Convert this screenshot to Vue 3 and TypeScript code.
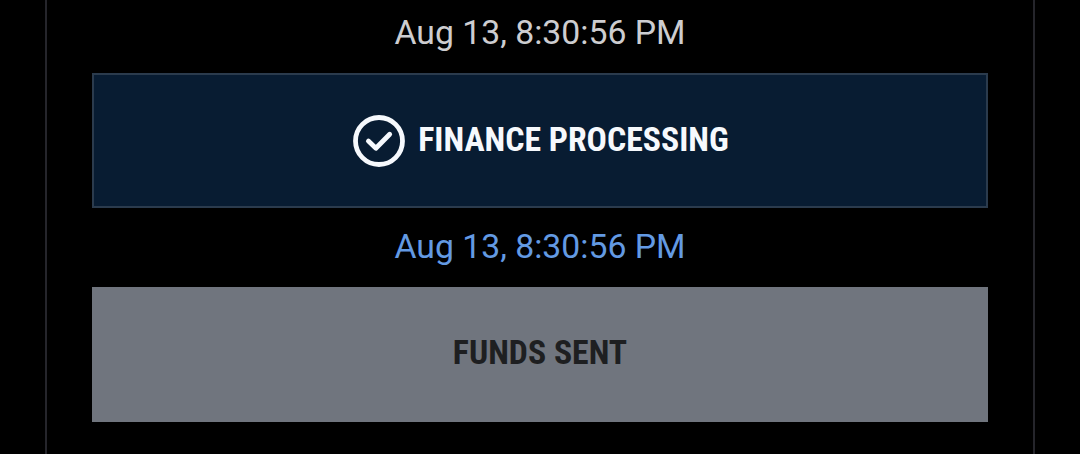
<script setup lang="ts">
interface Step {
  label: string
  time?: string
  state: 'active' | 'pending'
}

const previousTime: string = 'Aug 13, 8:30:56 PM'
const steps: Step[] = [
  { label: 'FINANCE PROCESSING', time: 'Aug 13, 8:30:56 PM', state: 'active' },
  { label: 'FUNDS SENT', state: 'pending' },
]
</script>

<template>
  <main class="screen">
    <section class="panel">
      <time class="time">{{ previousTime }}</time>
      <template v-for="step in steps" :key="step.label">
        <div class="step" :class="step.state">
          <svg v-if="step.state === 'active'" class="check" viewBox="0 0 52 52">
            <circle cx="26" cy="26" r="23.5" />
            <path d="M15.4 26.1 L22.9 33.3 L36.7 19.2" />
          </svg>
          <span class="label">{{ step.label }}</span>
        </div>
        <time v-if="step.time" class="time current">{{ step.time }}</time>
      </template>
    </section>
  </main>
</template>

<style>
body {
  margin: 0;
  background: #000;
}
</style>

<style scoped>
.screen {
  height: 454px;
  box-sizing: border-box;
  padding: 0 45px;
  overflow: hidden;
  background: #000;
  font-family: Roboto, sans-serif;
}
.panel {
  height: 454px;
  box-sizing: border-box;
  padding: 0 45px;
  border: solid #25252b;
  border-width: 0 2px;
}
.time {
  display: block;
  height: 73px;
  box-sizing: border-box;
  padding-top: 13px;
  color: #cdcdd0;
  font-size: 33.75px;
  line-height: 40px;
  text-align: center;
  white-space: nowrap;
}
.current {
  height: 79px;
  padding-top: 19px;
  color: #639ae3;
}
.step {
  display: flex;
  align-items: center;
  justify-content: center;
  height: 135px;
  box-sizing: border-box;
  gap: 13px;
}
.active {
  border: 2px solid #2b3b4d;
  background: #081c32;
  color: #f6f9fd;
}
.pending {
  background: #70757e;
  color: #1e1f21;
}
.check {
  width: 52px;
  height: 52px;
  fill: none;
  stroke: #f6f9fd;
  stroke-width: 4.8;
  stroke-linecap: round;
  stroke-linejoin: round;
}
.active .check {
  margin-left: 2px;
}
.label {
  padding-bottom: 3px;
  font-family: "Roboto Condensed", Roboto, sans-serif;
  font-size: 33.75px;
  font-weight: 700;
  font-stretch: 75%;
  line-height: 40px;
  white-space: nowrap;
}
.active .label {
  padding-bottom: 1px;
}
</style>
